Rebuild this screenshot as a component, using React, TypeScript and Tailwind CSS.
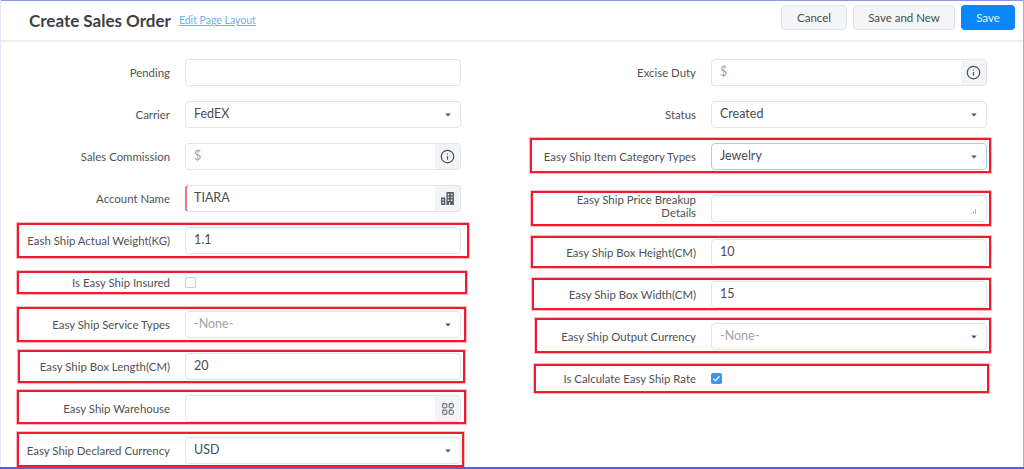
import { Info, LayoutGrid } from "lucide-react";

type Field = {
  label: string;
  kind: "text" | "select" | "addon" | "checkbox" | "textarea";
  value?: string;
  muted?: boolean;
  icon?: "info" | "building" | "grid";
  required?: boolean;
  focused?: boolean;
  checked?: boolean;
  rowClass?: string;
  labelClass?: string;
};

const leftFields: Field[] = [
  { label: "Pending", kind: "text" },
  { label: "Carrier", kind: "select", value: "FedEX" },
  { label: "Sales Commission", kind: "addon", value: "$", muted: true, icon: "info" },
  { label: "Account Name", kind: "addon", value: "TIARA", icon: "building", required: true },
  { label: "Eash Ship Actual Weight(KG)", kind: "text", value: "1.1" },
  { label: "Is Easy Ship Insured", kind: "checkbox" },
  { label: "Easy Ship Service Types", kind: "select", value: "-None-", muted: true },
  { label: "Easy Ship Box Length(CM)", kind: "text", value: "20" },
  { label: "Easy Ship Warehouse", kind: "addon", icon: "grid" },
  { label: "Easy Ship Declared Currency", kind: "select", value: "USD" },
];

const rightFields: Field[] = [
  { label: "Excise Duty", kind: "addon", value: "$", muted: true, icon: "info" },
  { label: "Status", kind: "select", value: "Created" },
  { label: "Easy Ship Item Category Types", kind: "select", value: "Jewelry", focused: true },
  { label: "Easy Ship Price Breakup\nDetails", kind: "textarea", rowClass: "mt-[10px]", labelClass: "-mt-[6px]" },
  { label: "Easy Ship Box Height(CM)", kind: "text", value: "10", rowClass: "mt-[2px]" },
  { label: "Easy Ship Box Width(CM)", kind: "text", value: "15" },
  { label: "Easy Ship Output Currency", kind: "select", value: "-None-", muted: true },
  { label: "Is Calculate Easy Ship Rate", kind: "checkbox", checked: true },
];

// annotation rectangles drawn on top of the form
const redBoxes = [
  "left-[17px] top-[223px] w-[452px] h-[35px]",
  "left-[17px] top-[271px] w-[450px] h-[23px]",
  "left-[17px] top-[307px] w-[449px] h-[35px]",
  "left-[18px] top-[350px] w-[447px] h-[33px]",
  "left-[17px] top-[390px] w-[449px] h-[34px]",
  "left-[17px] top-[432px] w-[447px] h-[35px]",
  "left-[530px] top-[138px] w-[461px] h-[35px]",
  "left-[531px] top-[191px] w-[460px] h-[35px]",
  "left-[531px] top-[236px] w-[460px] h-[32px]",
  "left-[532px] top-[278px] w-[459px] h-[32px]",
  "left-[535px] top-[318px] w-[456px] h-[35px]",
  "left-[534px] top-[364px] w-[455px] h-[29px]",
];

function BuildingIcon() {
  return (
    <svg width="15" height="15" viewBox="0 0 14 14" fill="#5b6068">
      <path d="M6 1h7v12H9.500v-2.500h-1V13H6z" fillRule="evenodd" />
      <path d="M1 6h4v7H1z" />
      <path d="M7.300 2.600h1.300v1.300H7.300zM10.300 2.600h1.300v1.300h-1.300zM7.300 5.300h1.300v1.300H7.300zM10.300 5.300h1.300v1.300h-1.300zM7.300 8h1.300v1.300H7.300zM10.300 8h1.300v1.300h-1.300zM2.200 7.600h1.500v1.300H2.200zM2.200 10.200h1.500v1.300H2.200z" fill="#eef0f2" />
    </svg>
  );
}

function Caret() {
  return (
    <svg width="6" height="4" viewBox="0 0 7 5" className="shrink-0">
      <path d="M0 .5h7L3.500 4.500z" fill="#3f5878" />
    </svg>
  );
}

function Control({ field }: { field: Field }) {
  const box = "h-[27px] w-[276px] rounded-[4px] border bg-white flex items-center";
  const border = field.focused ? "border-[#a9cdf3]" : "border-[#e3e4e8]";
  const text = field.muted ? "text-[#a2a4a8]" : "text-[#4a4c50]";

  if (field.kind === "checkbox") {
    return field.checked ? (
      <span className="w-[11px] h-[11px] rounded-[2px] bg-[#3d94ea] flex items-center justify-center">
        <svg width="9" height="9" viewBox="0 0 9 9" fill="none">
          <path d="M1.500 4.700l2 2 4-4.500" stroke="#e8f3fe" strokeWidth="1.400" />
        </svg>
      </span>
    ) : (
      <span className="w-[11px] h-[11px] rounded-[2px] border border-[#c9cbd0] bg-white" />
    );
  }

  if (field.kind === "textarea") {
    return (
      <div className={`${box} ${border} relative`}>
        <span className="absolute right-[10px] bottom-[7px] flex items-end gap-px">
          <i className="block w-px h-px bg-[#b5b7bb]" />
          <i className="block w-px h-[3px] bg-[#b5b7bb]" />
          <i className="block w-px h-[5px] bg-[#b5b7bb]" />
        </span>
      </div>
    );
  }

  return (
    <div className={`${box} ${border} overflow-hidden ${field.required ? "border-l-2 border-l-[#f0727f]" : ""}`}>
      <span className={`flex-1 -mt-px text-[12.5px] ${field.required ? "pl-[7px]" : "pl-[8px]"} ${text}`}>{field.value}</span>
      {field.kind === "select" && (
        <span className="pr-[9px] flex">
          <Caret />
        </span>
      )}
      {field.kind === "addon" && (
        <span className="w-[25px] h-full bg-[#f3f4f6] flex items-center justify-center text-[#4c4f55]">
          {field.icon === "info" && <Info size={15} strokeWidth={2} />}
          {field.icon === "building" && <BuildingIcon />}
          {field.icon === "grid" && <LayoutGrid size={14} strokeWidth={1.6} />}
        </span>
      )}
    </div>
  );
}

function FormColumn({ fields }: { fields: Field[] }) {
  return (
    <div className="w-[526px] shrink-0 flex flex-col gap-[15px]">
      {fields.map((field) => (
        <div key={field.label} className={`flex items-center gap-[15px] h-[27px] ${field.rowClass ?? ""}`}>
          <label className={`w-[170px] text-right whitespace-pre-line text-[11.4px] leading-[13px] text-[#4f5155] ${field.labelClass ?? ""}`}>{field.label}</label>
          <Control field={field} />
        </div>
      ))}
    </div>
  );
}

export default function App() {
  return (
    <div className="relative w-[1024px] h-[469px] overflow-hidden bg-white font-['Lato','Noto_Sans',sans-serif]">
      <header className="h-[42px] border-b-2 border-[#eeeeee] flex items-center pl-[29px] pr-[9px]">
        <h1 className="text-[17px] font-bold text-[#3f4145] leading-none">Create Sales Order</h1>
        <a className="ml-[8px] mt-[2px] text-[10.5px] text-[#6eaef5] underline">Edit Page Layout</a>
        <div className="ml-auto flex gap-[6px] -mt-[5px] text-[11.5px]">
          <button className="w-[66px] h-[25px] rounded-[4px] border border-[#dfe3ea] bg-[#f3f5f7] text-[#4a4c50]">Cancel</button>
          <button className="w-[102px] h-[25px] rounded-[4px] border border-[#dfe3ea] bg-[#f3f5f7] text-[#4a4c50]">Save and New</button>
          <button className="w-[54px] h-[25px] rounded-[4px] bg-[#0a86f7] text-[#eaf4ff]">Save</button>
        </div>
      </header>

      <main className="flex pt-[17px]">
        <FormColumn fields={leftFields} />
        <FormColumn fields={rightFields} />
      </main>

      {redBoxes.map((pos) => (
        <div key={pos} className={`absolute border-2 border-[#ee1c2e] shadow-[0_0_0_1px_rgba(238,28,46,0.3)] ${pos}`} />
      ))}

      {/* screenshot frame */}
      <div className="absolute inset-x-0 top-0 h-px bg-[#8f96e2]" />
      <div className="absolute inset-y-0 left-0 w-px bg-[#e6e8f8]" />
      <div className="absolute inset-y-0 right-0 w-px bg-[#a4a9ea]" />
      <div className="absolute inset-x-0 bottom-0 h-[2px] bg-[#5564cf]" />
    </div>
  );
}
